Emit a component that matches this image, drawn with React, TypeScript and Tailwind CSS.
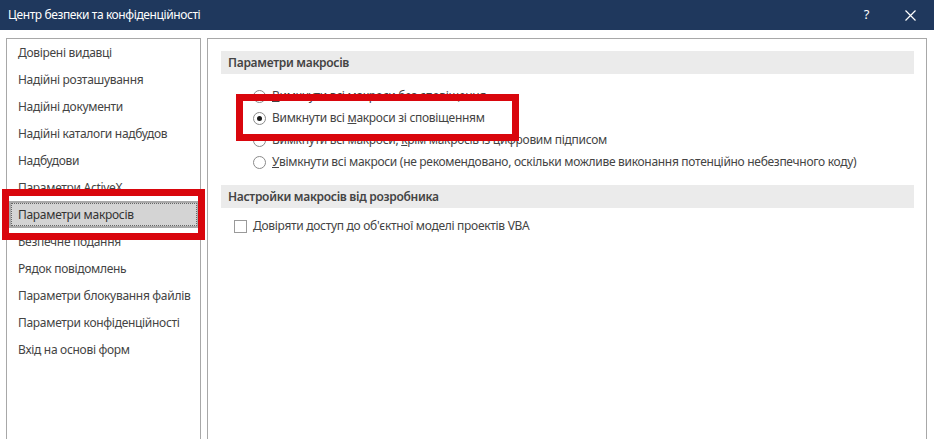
const font = { fontFamily: '"Segoe UI", "Noto Sans", sans-serif' };

const navItems = [
  "Довірені видавці",
  "Надійні розташування",
  "Надійні документи",
  "Надійні каталоги надбудов",
  "Надбудови",
  "Параметри ActiveX",
  "Параметри макросів",
  "Безпечне подання",
  "Рядок повідомлень",
  "Параметри блокування файлів",
  "Параметри конфіденційності",
  "Вхід на основі форм",
];

const macroOptions = [
  { key: "В", rest: "имкнути всі макроси без сповіщення", pre: "" },
  { pre: "Вимкнути всі ", key: "м", rest: "акроси зі сповіщенням" },
  { pre: "Вимкнути всі макроси, ", key: "к", rest: "рім макросів із цифровим підписом" },
  { pre: "", key: "У", rest: "вімкнути всі макроси (не рекомендовано, оскільки можливе виконання потенційно небезпечного коду)" },
];

function Radio({ checked }: { checked: boolean }) {
  return (
    <span className="flex items-center justify-center w-[13px] h-[13px] rounded-full border border-[#8a8a8a] bg-white">
      {checked && <span className="w-[5px] h-[5px] rounded-full bg-[#1a1a1a]" />}
    </span>
  );
}

export default function App() {
  const selected = 1;

  return (
    <div
      className="relative flex flex-col w-[934px] h-[439px] overflow-hidden bg-white text-[12px] tracking-[-0.3px] text-[#444]"
      style={font}
    >
      {/* Title bar */}
      <div className="flex items-center h-[30px] bg-[#1f385d] text-white shrink-0">
        <span className="ml-[8px] tracking-[-0.4px]">Центр безпеки та конфіденційності</span>
        <span className="ml-auto mr-[36px] text-[13px]">?</span>
        <svg width="11" height="11" viewBox="0 0 11 11" className="mr-[18px]">
          <path d="M0.5 0.5 L10.5 10.5 M10.5 0.5 L0.5 10.5" stroke="white" strokeWidth="1.2" />
        </svg>
      </div>

      <div className="flex flex-1 pt-[8px] gap-[6px] pl-[6px] pr-[7px]">
        {/* Left nav */}
        <div className="w-[195px] border border-b-0 border-[#a8a8a8] shrink-0">
          {navItems.map((item, i) =>
            i === 6 ? (
              <div
                key={item}
                className="flex items-center h-[27px] ml-[2px] mr-[1px] border-2 border-[#a9a9a9] bg-[#d4d4d4]"
              >
                <div className="flex items-center w-full h-full border border-dotted border-[#666] pl-[6px] text-[#333]">
                  {item}
                </div>
              </div>
            ) : (
              <div key={item} className="flex items-center h-[27px] pl-[11px]">
                {item}
              </div>
            )
          )}
        </div>

        {/* Right content */}
        <div className="flex-1 border border-b-0 border-[#a8a8a8] pt-[12px] pl-[13px] pr-[12px]">
          <div className="flex items-center h-[23px] bg-[#ebebeb] pl-[7px] font-semibold text-[#444]">
            Параметри макросів
          </div>
          <div className="mt-[11px] pl-[32px]">
            {macroOptions.map((o, i) => (
              <div key={i} className="flex items-center h-[22px] gap-[6px]">
                <Radio checked={i === selected} />
                <span className="whitespace-nowrap">
                  {o.pre}
                  <span className="underline">{o.key}</span>
                  {o.rest}
                </span>
              </div>
            ))}
          </div>

          <div className="flex items-center h-[23px] mt-[12px] bg-[#ebebeb] pl-[7px] font-semibold text-[#444]">
            Настройки макросів від розробника
          </div>
          <div className="flex items-center h-[22px] mt-[7px] pl-[13px] gap-[6px]">
            <span className="w-[13px] h-[13px] border border-[#9a9a9a] bg-white" />
            <span>
              <span className="underline">Д</span>овіряти доступ до об'єктної моделі проектів VBA
            </span>
          </div>
        </div>
      </div>

      {/* Red annotation highlights */}
      <div className="absolute left-[2px] top-[189px] w-[203px] h-[51px] border-[7px] border-[#d9060d]" />
      <div className="absolute left-[236px] top-[94px] w-[283px] h-[47px] border-[7px] border-[#d9060d]" />
    </div>
  );
}
